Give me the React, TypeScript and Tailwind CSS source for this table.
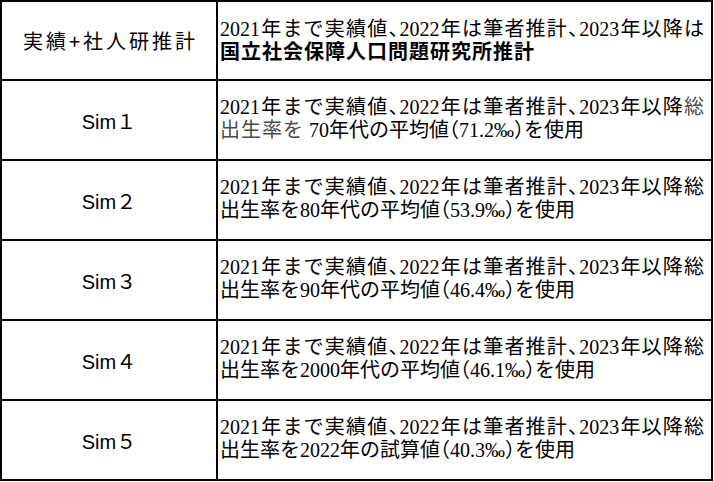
import React from "react";

type Row = {
  label: React.ReactNode;
  line1: React.ReactNode;
  line2: React.ReactNode;
};

const SimLabel = ({ n }: { n: string }) => (
  <span className="pt-[3px]">
    <span className="font-['Liberation_Sans',sans-serif]">Sim</span>
    <span className="font-['Noto_Sans_CJK_JP',sans-serif]">{n}</span>
  </span>
);

const L1 = "2021年まで実績値、2022年は筆者推計、2023年以降";

const rows: Row[] = [
  {
    label: (
      <span className="font-['Noto_Sans_CJK_JP',sans-serif] tracking-[3px] pl-[3px]">
        実績+社人研推計
      </span>
    ),
    line1: <>{L1}は</>,
    line2: <span className="font-bold tracking-[1px]">国立社会保障人口問題研究所推計</span>,
  },
  {
    label: <SimLabel n="１" />,
    line1: (
      <>
        {L1}
        <span className="text-[#4a4a4a]">総</span>
      </>
    ),
    line2: (
      <>
        <span className="text-[#4a4a4a] tracking-[1px]">出生率を</span> 70年代の平均値（71.2‰）を使用
      </>
    ),
  },
  {
    label: <SimLabel n="２" />,
    line1: <>{L1}総</>,
    line2: <>出生率を80年代の平均値（53.9‰）を使用</>,
  },
  {
    label: <SimLabel n="３" />,
    line1: <>{L1}総</>,
    line2: <>出生率を90年代の平均値（46.4‰）を使用</>,
  },
  {
    label: <SimLabel n="４" />,
    line1: <>{L1}総</>,
    line2: <>出生率を2000年代の平均値（46.1‰）を使用</>,
  },
  {
    label: <SimLabel n="５" />,
    line1: <>{L1}総</>,
    line2: <>出生率を2022年の試算値（40.3‰）を使用</>,
  },
];

export default function App() {
  return (
    <div className="w-[714px] h-[482px] bg-white">
      <div className="grid w-[713px] grid-cols-[214px_493px] grid-rows-[77px_78px_78px_78px_78px_78px] gap-[2px] bg-black p-[2px] text-black">
        {rows.map((r, i) => (
          <React.Fragment key={i}>
            <div className="flex items-center justify-center bg-white text-[20px] leading-[23px]">
              {r.label}
            </div>
            <div
              className={`flex flex-col justify-center bg-white pl-[2px] pr-[7px] text-[20px] leading-[23px] font-['Liberation_Serif','Noto_Sans_CJK_JP',serif] [font-feature-settings:'halt'] ${
                i === 0 ? "" : "pb-[2px]"
              }`}
            >
              <div className="[text-align-last:justify] text-justify">{r.line1}</div>
              <div>{r.line2}</div>
            </div>
          </React.Fragment>
        ))}
      </div>
    </div>
  );
}
